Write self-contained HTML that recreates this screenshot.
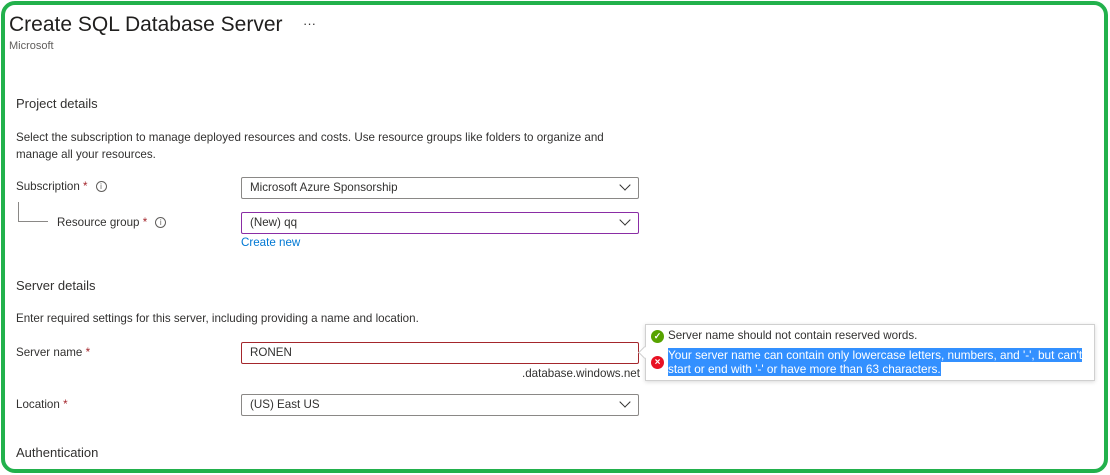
<!DOCTYPE html>
<html><head><style>
*{box-sizing:border-box;margin:0;padding:0}
body{width:1110px;height:475px;background:#fff;font-family:"Segoe UI","Liberation Sans",sans-serif;color:#323130;position:relative;overflow:hidden}
.frame{position:absolute;left:1px;top:1px;width:1107px;height:472px;border:4px solid #22b14c;border-radius:14px}
.t{position:absolute;white-space:nowrap}
.s{font-size:11.6px}
.h{font-size:13px}
.inp{position:absolute;left:241px;width:398px;height:22px;border:1px solid #8a8886;border-radius:2px;font-size:11.6px;padding:3px 8px;color:#323130}
.chev{position:absolute;right:9px;width:8px;height:8px;border-right:1px solid #323130;border-bottom:1px solid #323130;transform:rotate(45deg);top:3px}
.req{color:#a4262c}
.info{display:inline-block;width:11px;height:11px;border:1px solid #605e5c;border-radius:50%;font-size:8px;line-height:9px;text-align:center;vertical-align:1px;margin-left:8px;color:#605e5c}
</style></head><body>
<div class="frame"></div>
<div class="t" style="left:9px;top:13px;font-size:21px;color:#201f1e">Create SQL Database Server</div>
<div class="t" style="left:303px;top:16px;font-size:13px">···</div>
<div class="t" style="left:9px;top:40px;font-size:11px;color:#605e5c">Microsoft</div>
<div class="t h" style="left:16px;top:96px">Project details</div>
<div class="t s" style="left:16px;top:129px;line-height:17px">Select the subscription to manage deployed resources and costs. Use resource groups like folders to organize and<br>manage all your resources.</div>
<div class="t s" style="left:16px;top:180px">Subscription <span class="req">*</span><span class="info">i</span></div>
<div style="position:absolute;left:18px;top:202px;width:30px;height:20px;border-left:1px solid #8a8886;border-bottom:1px solid #8a8886"></div>
<div class="t s" style="left:57px;top:216px">Resource group <span class="req">*</span><span class="info">i</span></div>
<div class="inp" style="top:177px">Microsoft Azure Sponsorship<div class="chev"></div></div>
<div class="inp" style="top:212px;border-color:#8a2da5">(New) qq<div class="chev"></div></div>
<div class="t s" style="left:241px;top:236px;color:#0078d4">Create new</div>
<div class="t h" style="left:16px;top:278px">Server details</div>
<div class="t s" style="left:16px;top:312px">Enter required settings for this server, including providing a name and location.</div>
<div class="t s" style="left:16px;top:346px">Server name <span class="req">*</span></div>
<div class="inp" style="top:342px;border-color:#a4262c">RONEN</div>
<div class="t s" style="left:522px;top:367px">.database.windows.net</div>
<div class="t s" style="left:16px;top:398px">Location <span class="req">*</span></div>
<div class="inp" style="top:394px">(US) East US<div class="chev"></div></div>
<div class="t h" style="left:16px;top:445px">Authentication</div>
<div style="position:absolute;left:645px;top:324px;width:450px;height:57px;background:#fff;border:1px solid #d0d0d0;box-shadow:0 1px 4px rgba(0,0,0,.15)"></div>
<div style="position:absolute;left:640px;top:348px;width:9px;height:9px;background:#fff;border-left:1px solid #d0d0d0;border-bottom:1px solid #d0d0d0;transform:rotate(45deg)"></div>
<div style="position:absolute;left:651px;top:330px;width:13px;height:13px;border-radius:50%;background:#57a300;color:#fff;font-size:9px;line-height:13px;text-align:center;font-weight:bold">✓</div>
<div class="t s" style="left:668px;top:329px">Server name should not contain reserved words.</div>
<div style="position:absolute;left:651px;top:356px;width:13px;height:13px;border-radius:50%;background:#e81123;color:#fff;font-size:10px;line-height:13px;text-align:center;font-weight:bold">×</div>
<div class="t s" style="left:668px;top:348px;line-height:14px;font-size:11.8px"><span style="background:#3390ff;color:#fff">Your server name can contain only lowercase letters, numbers, and '-', but can't</span><br><span style="background:#3390ff;color:#fff">start or end with '-' or have more than 63 characters.</span></div>
</body></html>
